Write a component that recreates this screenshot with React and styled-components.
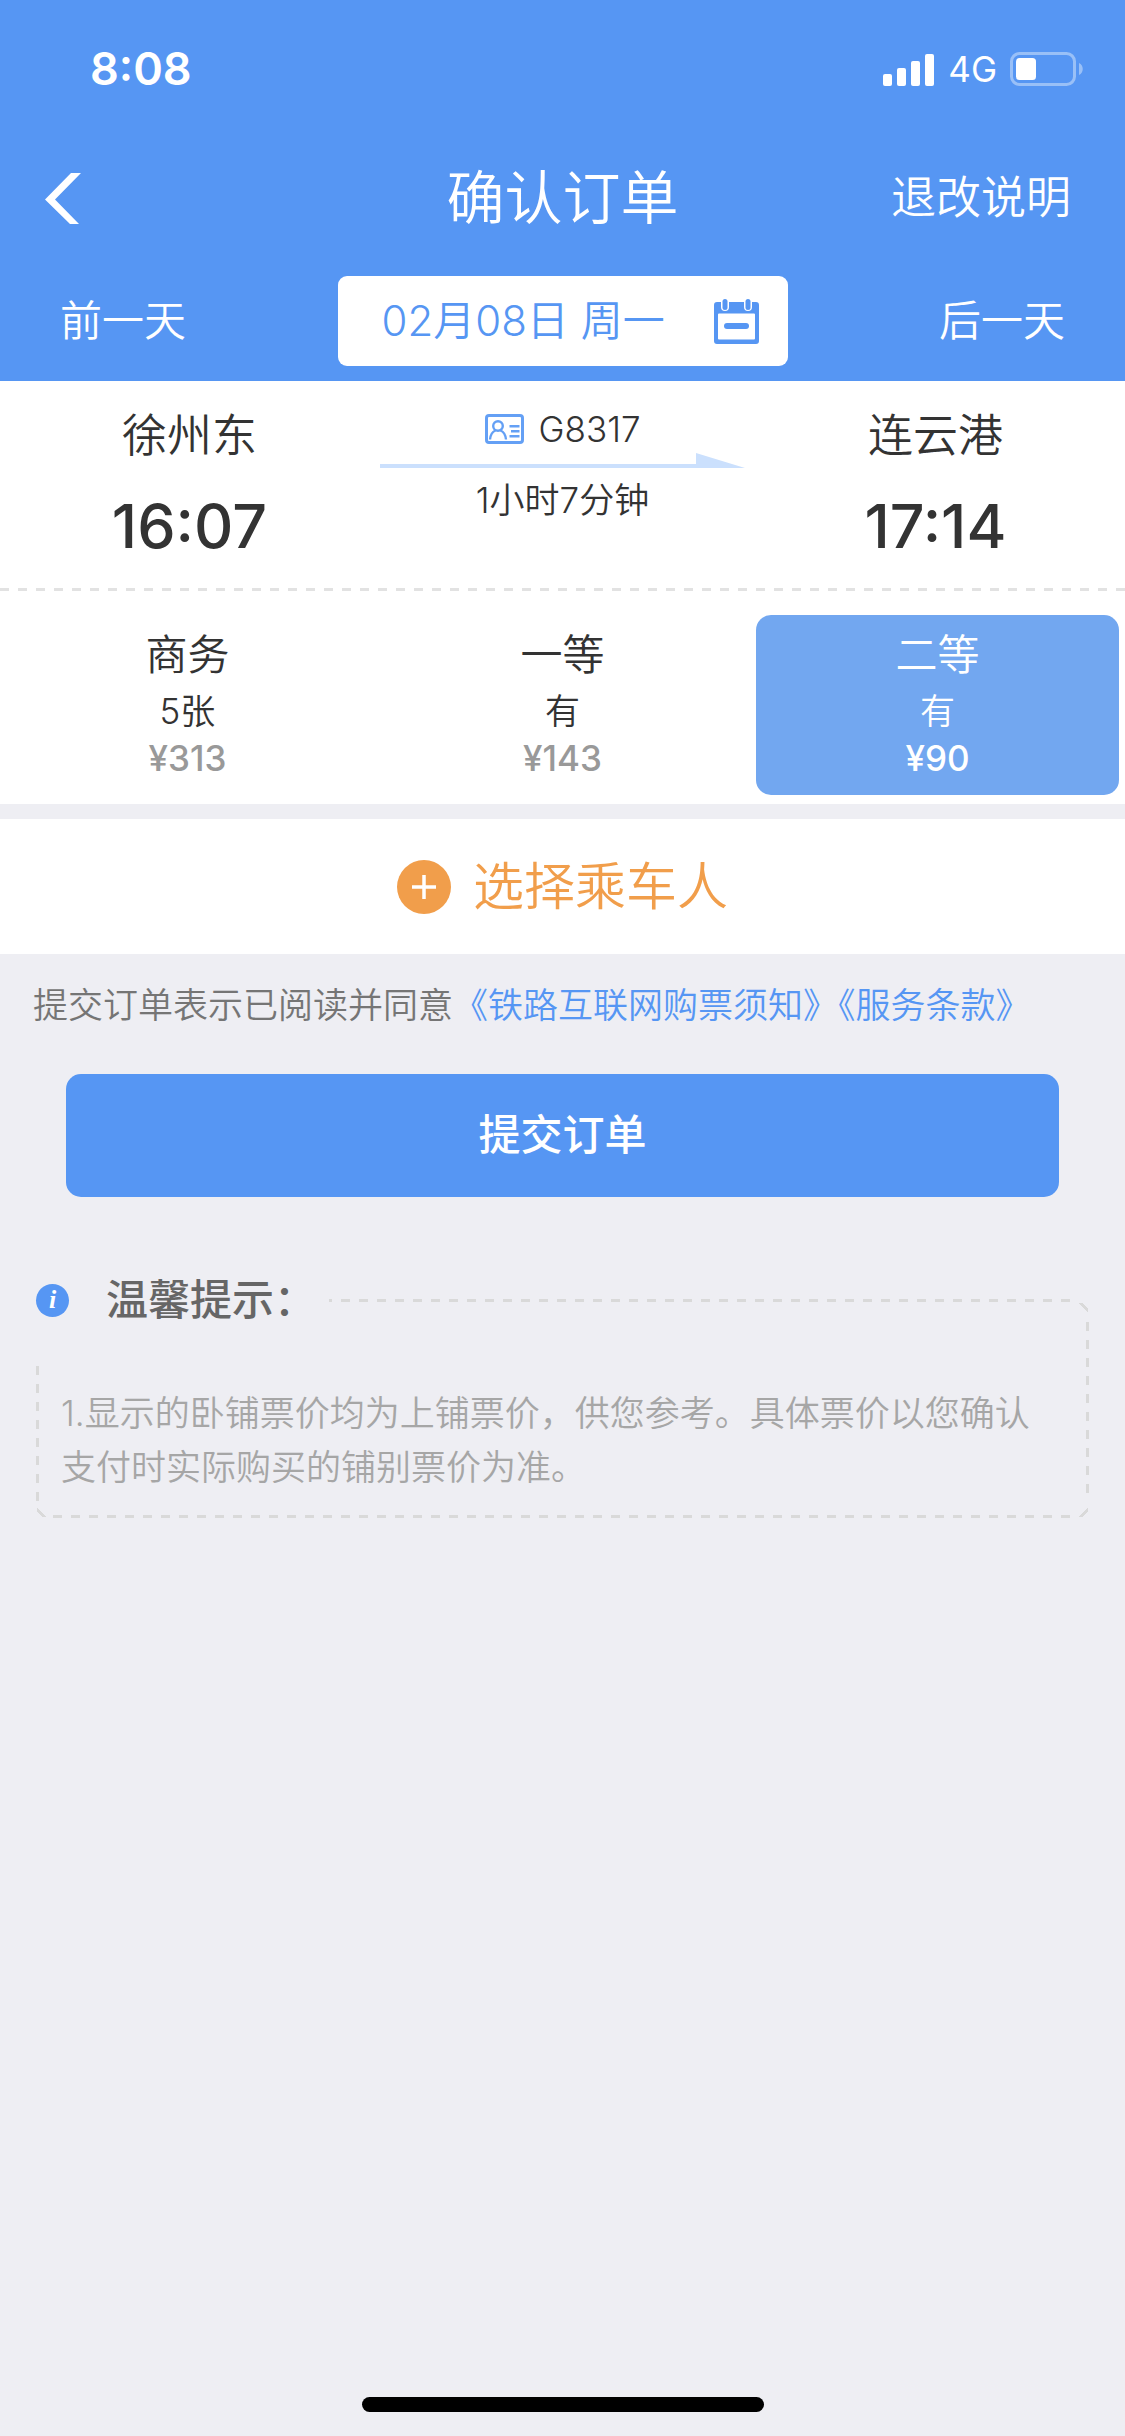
import { useState } from "react";
import styled, { createGlobalStyle, css } from "styled-components";

const GlobalStyles = createGlobalStyle`
  :root {
    --color-blue: #5696f3;
    --color-blue-soft: #72a7f0;
    --color-orange: #f19e4b;
    --color-bg: #eeeef3;
    --color-text: #333;
    --color-dash: #e2e2e2;
    --color-dash-dark: #d9d9d9;
  }

  *,
  *::before,
  *::after {
    box-sizing: border-box;
    margin: 0;
    padding: 0;
  }

  body {
    background-color: var(--color-bg);
    color: var(--color-text);
    font-family: Inter, "Noto Sans CJK SC", sans-serif;
    font-size: 35px;
    font-weight: 350;
    line-height: 1.2;
  }

  button {
    border: none;
    background: none;
    color: inherit;
    font: inherit;
    cursor: pointer;
  }

  a {
    color: inherit;
    text-decoration: none;
  }

  svg {
    display: block;
  }
`;

const Page = styled.div`
  display: flex;
  flex-direction: column;
  min-height: 100vh;
`;

const Header = styled.header`
  background-color: var(--color-blue);
  color: #fff;
`;

const StatusBar = styled.div`
  display: flex;
  align-items: center;
  justify-content: space-between;
  height: 138px;
  padding: 0 42px 0 90px;
`;

const Clock = styled.time`
  font-size: 45px;
  font-weight: 600;
`;

const StatusIcons = styled.div`
  display: flex;
  align-items: center;
  gap: 13px;
  font-weight: 400;
`;

const NavBar = styled.nav`
  display: grid;
  grid-template-columns: 1fr auto 1fr;
  align-items: center;
  height: 120px;
  padding: 0 45px;
`;

const BackButton = styled.button`
  justify-self: start;
`;

const Title = styled.h1`
  font-size: 58px;
  font-weight: 350;
  line-height: 60px;
`;

const NavLink = styled.a`
  justify-self: end;
  padding-right: 9px;
  font-size: 45px;
`;

const DateRow = styled.div`
  display: grid;
  grid-template-columns: 3fr 4fr 3fr;
  padding: 18px 0 15px;
  font-size: 42px;
`;

const DayButton = styled.button`
  padding: 0 60px;
  text-align: ${(props) => props.$align};
`;

const DateButton = styled.button`
  display: flex;
  align-items: center;
  justify-content: space-between;
  height: 90px;
  padding: 0 29px 0 44px;
  border-radius: 9px;
  background-color: #fff;
  color: var(--color-blue);
`;

const Trip = styled.section`
  display: grid;
  grid-template-columns: repeat(3, 1fr);
  padding: 0 3px;
  background-color: #fff;
  text-align: center;
`;

const Station = styled.div`
  display: flex;
  flex-direction: column;
  gap: 20px;
  padding: 23px 0;
`;

const StationName = styled.h2`
  font-size: 45px;
  font-weight: 350;
  line-height: 63px;
`;

const StationTime = styled.time`
  font-size: 61px;
  font-weight: 500;
  line-height: 78px;
`;

const Train = styled.div`
  padding: 27px 4px 0;
  line-height: 42px;
`;

const TrainCode = styled.p`
  display: flex;
  align-items: center;
  justify-content: center;
  gap: 15px;
  margin-bottom: 3px;
`;

const Duration = styled.p`
  margin-top: 11px;
`;

const Divider = styled.hr`
  height: 3px;
  border: none;
  background: repeating-linear-gradient(
    to right,
    var(--color-dash) 0 9px,
    #fff 9px 18px
  );
`;

const Seats = styled.section`
  display: grid;
  grid-template-columns: repeat(3, 1fr);
  padding: 24px 0 9px;
  background-color: #fff;
`;

const SeatButton = styled.button`
  display: flex;
  flex-direction: column;
  align-items: center;
  margin: 0 6px;
  padding: 10px 0 16px;
  border-radius: 15px;

  ${(props) =>
    props.$selected &&
    css`
      background-color: var(--color-blue-soft);
      color: #fff;
    `}
`;

const SeatName = styled.span`
  font-size: 42px;
  line-height: 60px;
`;

const SeatLeft = styled.span`
  line-height: 52px;
`;

const SeatPrice = styled.span`
  color: ${(props) => (props.$selected ? "#fff" : "#999")};
  font-weight: 500;
  line-height: 42px;
`;

const PassengerButton = styled.button`
  display: flex;
  align-items: center;
  justify-content: center;
  gap: 22px;
  height: 135px;
  margin-top: 15px;
  background-color: #fff;
  color: var(--color-orange);
  font-size: 51px;
`;

const Agreement = styled.p`
  padding: 24px 33px 0;
  color: #757575;
  line-height: 54px;

  & a {
    color: var(--color-blue);
  }
`;

const SubmitButton = styled.button`
  height: 123px;
  margin: 42px 66px 0;
  border-radius: 15px;
  background-color: var(--color-blue);
  color: #fff;
  font-size: 42px;
  font-weight: 500;
`;

/* Long dashes on every edge, plus one slanted dash in each corner */
const edge = (direction) =>
  `repeating-linear-gradient(${direction}, var(--color-dash-dark) 0 9px, transparent 9px 18px)`;
const corner = (angle) =>
  `linear-gradient(${angle}, transparent 4px, var(--color-dash-dark) 4px 7px, transparent 7px)`;

const Notice = styled.section`
  display: flex;
  flex-direction: column;
  align-items: flex-start;
  margin: 102px 36px 0;
  padding-bottom: 24px;
  background:
    ${edge("to right")} 17px 0 / calc(100% - 28px) 3px,
    ${edge("to right")} 17px 100% / calc(100% - 28px) 3px,
    ${edge("to bottom")} 0 13px / 3px calc(100% - 26px),
    ${edge("to bottom")} 100% 23px / 3px calc(100% - 40px),
    ${corner("225deg")} calc(100% - 1px) 4px / 9px 9px,
    ${corner("315deg")} calc(100% - 1px) calc(100% - 1px) / 9px 9px,
    ${corner("45deg")} 1px calc(100% - 1px) / 9px 9px;
  background-repeat: no-repeat;
`;

const NoticeTitle = styled.h3`
  display: flex;
  align-items: center;
  gap: 37px;
  margin-top: -27px;
  padding: 0 13px 38px 0;
  background-color: var(--color-bg);
  color: #666;
  font-size: 42px;
  font-weight: 500;
  line-height: 56px;
`;

const InfoBadge = styled.span`
  width: 33px;
  height: 33px;
  border-radius: 50%;
  background-color: var(--color-blue);
  color: #fff;
  font-family: "Liberation Serif", serif;
  font-size: 26px;
  font-style: italic;
  font-weight: 700;
  line-height: 32px;
  text-align: center;
`;

const NoticeText = styled.p`
  padding: 20px 25px 0;
  color: #a6a6a6;
  line-height: 54px;
`;

const HomeIndicator = styled.div`
  width: 402px;
  height: 15px;
  margin: auto auto 24px;
  border-radius: 8px;
  background-color: #000;
`;

function SignalIcon() {
  return (
    <svg width="52" height="33" viewBox="0 0 52 33" fill="#fff">
      <rect x="0" y="21" width="9" height="12" rx="2" />
      <rect x="14" y="15" width="9" height="18" rx="2" />
      <rect x="28" y="8" width="9" height="25" rx="2" />
      <rect x="42" y="1" width="9" height="32" rx="2" />
    </svg>
  );
}

function BatteryIcon() {
  return (
    <svg width="73" height="34" viewBox="0 0 73 34">
      <g opacity="0.4">
        <rect
          x="1.5"
          y="1.5"
          width="63"
          height="31"
          rx="8"
          fill="none"
          stroke="#fff"
          strokeWidth="3"
        />
        <path d="M69 11c5 2 5 10 0 12z" fill="#fff" />
      </g>
      <rect x="6" y="6" width="20" height="22" rx="3.5" fill="#fff" />
    </svg>
  );
}

function BackIcon() {
  return (
    <svg width="37" height="51" viewBox="0 0 37 51">
      <path d="M26 0H36L10 26.5L34 51H25L0 26.5z" fill="#fff" />
    </svg>
  );
}

function CalendarIcon() {
  return (
    <svg width="45" height="46" viewBox="0 0 45 46">
      <path
        fillRule="evenodd"
        d="M3 4H42Q45 4 45 7V43Q45 46 42 46H3Q0 46 0 43V7Q0 4 3 4zM5 15.500Q4 15.500 4 16.500V40.500Q4 41.500 5 41.500H40Q41 41.500 41 40.500V16.500Q41 15.500 40 15.500z"
        fill="currentColor"
      />
      <rect x="7" y="0" width="8" height="13" rx="4" fill="#fff" />
      <rect x="30" y="0" width="8" height="13" rx="4" fill="#fff" />
      <rect x="8.500" y="1" width="5" height="11" rx="2.500" fill="currentColor" />
      <rect x="31.500" y="1" width="5" height="11" rx="2.500" fill="currentColor" />
      <rect x="10" y="25" width="25" height="6" rx="3" fill="currentColor" />
    </svg>
  );
}

function IdCardIcon() {
  return (
    <svg
      width="39"
      height="30"
      viewBox="0 0 39 30"
      fill="none"
      stroke="#64a0f5"
      strokeWidth="2.400"
    >
      <rect x="1.500" y="1.500" width="36" height="27" rx="2.500" strokeWidth="3" />
      <circle cx="13" cy="12" r="4.800" />
      <path d="M5 25.500c.5-5 3-8 5.500-9M21 25.500c-.5-5-3-8-5.500-9" />
      <path d="M24.500 12.200h10M26 17.300h8.500M24.500 22.300h10" />
    </svg>
  );
}

function ArrowLine() {
  return (
    <svg
      width="100%"
      height="15"
      viewBox="0 0 365 15"
      preserveAspectRatio="none"
      fill="#cbe0fd"
    >
      <path d="M0 11H316V0L365 15H0z" />
    </svg>
  );
}

function PlusIcon() {
  return (
    <svg width="54" height="54" viewBox="0 0 54 54">
      <circle cx="27" cy="27" r="27" fill="currentColor" />
      <path d="M27 15V39M15 27H39" stroke="#fff" strokeWidth="3.500" />
    </svg>
  );
}

const seats = [
  { name: "商务", left: "5张", price: "¥313" },
  { name: "一等", left: "有", price: "¥143" },
  { name: "二等", left: "有", price: "¥90" },
];

function App() {
  const [selected, setSelected] = useState("二等");

  return (
    <>
      <GlobalStyles />
      <Page>
        <Header>
          <StatusBar>
            <Clock>8:08</Clock>
            <StatusIcons>
              <SignalIcon />
              <span>4G</span>
              <BatteryIcon />
            </StatusIcons>
          </StatusBar>
          <NavBar>
            <BackButton aria-label="返回">
              <BackIcon />
            </BackButton>
            <Title>确认订单</Title>
            <NavLink href="#rules">退改说明</NavLink>
          </NavBar>
          <DateRow>
            <DayButton $align="left">前一天</DayButton>
            <DateButton>
              02月08日 周一
              <CalendarIcon />
            </DateButton>
            <DayButton $align="right">后一天</DayButton>
          </DateRow>
        </Header>

        <Trip>
          <Station>
            <StationName>徐州东</StationName>
            <StationTime>16:07</StationTime>
          </Station>
          <Train>
            <TrainCode>
              <IdCardIcon />
              G8317
            </TrainCode>
            <ArrowLine />
            <Duration>1小时7分钟</Duration>
          </Train>
          <Station>
            <StationName>连云港</StationName>
            <StationTime>17:14</StationTime>
          </Station>
        </Trip>
        <Divider />
        <Seats>
          {seats.map((seat) => (
            <SeatButton
              key={seat.name}
              $selected={seat.name === selected}
              aria-pressed={seat.name === selected}
              onClick={() => setSelected(seat.name)}
            >
              <SeatName>{seat.name}</SeatName>
              <SeatLeft>{seat.left}</SeatLeft>
              <SeatPrice $selected={seat.name === selected}>
                {seat.price}
              </SeatPrice>
            </SeatButton>
          ))}
        </Seats>

        <PassengerButton>
          <PlusIcon />
          选择乘车人
        </PassengerButton>

        <Agreement>
          提交订单表示已阅读并同意
          <a href="#notice">《铁路互联网购票须知》</a>
          <a href="#terms">《服务条款》</a>
        </Agreement>
        <SubmitButton>提交订单</SubmitButton>

        <Notice>
          <NoticeTitle>
            <InfoBadge aria-hidden="true">i</InfoBadge>
            温馨提示：
          </NoticeTitle>
          <NoticeText>
            1.显示的卧铺票价均为上铺票价，供您参考。具体票价以您确认支付时实际购买的铺别票价为准。
          </NoticeText>
        </Notice>

        <HomeIndicator />
      </Page>
    </>
  );
}

export default App;
